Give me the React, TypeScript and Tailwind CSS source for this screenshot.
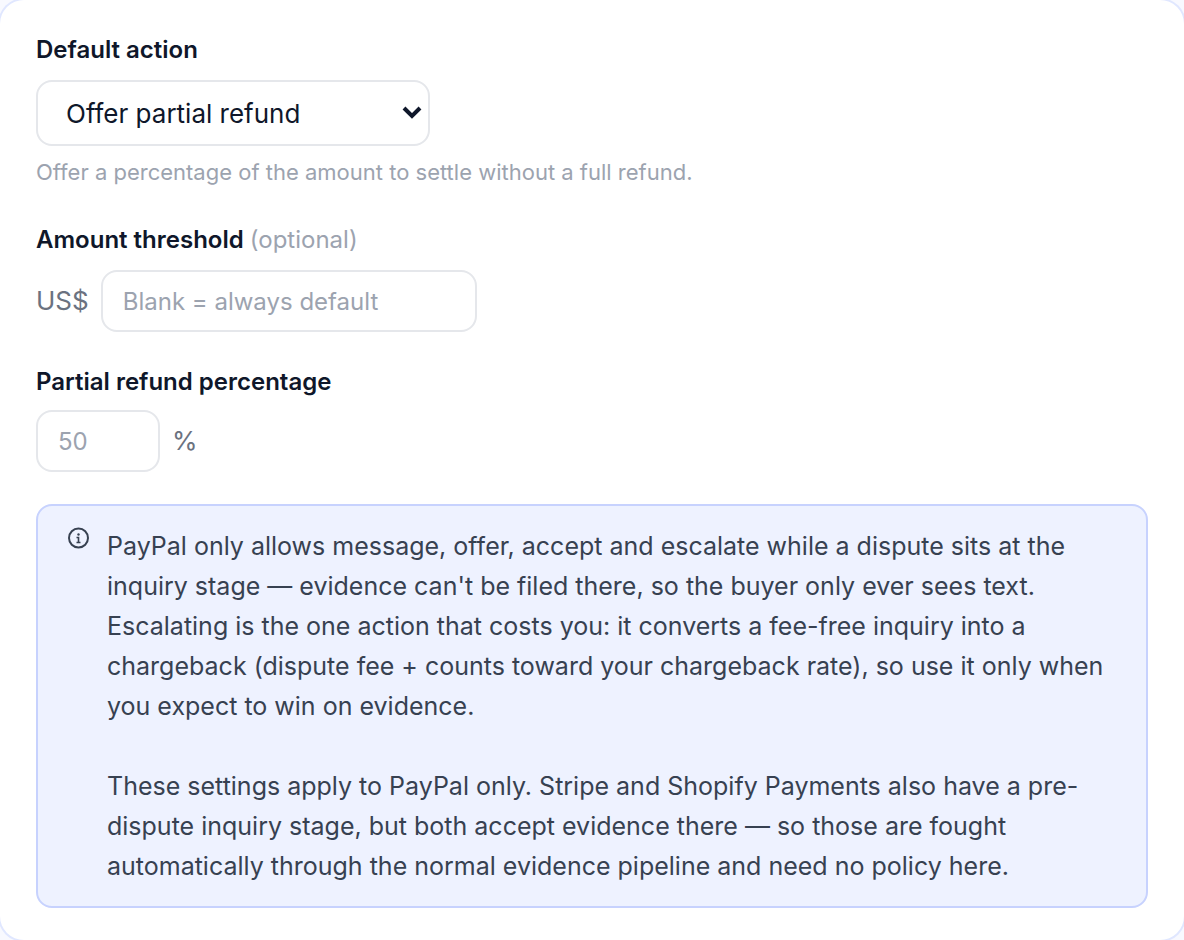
const App = () => {
    return (
        <div className="overflow-hidden bg-[#f8f9ff] font-[Inter,sans-serif]">
            <main className="flex flex-col gap-8 rounded-3xl bg-white px-9 py-8 text-[#0f172a] ring-2 ring-[#e0e7ff]">

                <div className="flex flex-col items-start">
                    <label htmlFor="action" className={fieldLabel}>Default action</label>
                    <div className="relative mt-3">
                        <select id="action" className="h-[66px] w-[394px] appearance-none rounded-2xl border-2 border-[#e5e7eb] bg-white px-7 text-[26px]">
                            <option>Offer partial refund</option>
                            <option>Accept refund</option>
                            <option>Escalate</option>
                        </select>
                        <svg className="pointer-events-none absolute top-6 right-2" width="20" height="18" viewBox="0 0 20 18" fill="none" stroke="currentColor" strokeWidth="4">
                            <path d="M2 4l8 8 8-8" />
                        </svg>
                    </div>
                    <p className="mt-2 text-[22px] leading-9 text-[#9ca3af]">
                        Offer a percentage of the amount to settle without a full refund.
                    </p>
                </div>

                <div className="flex flex-col items-start">
                    <label htmlFor="threshold" className={fieldLabel}>
                        Amount threshold <span className="font-normal text-[#9ca3af]">(optional)</span>
                    </label>
                    <div className="mt-3 flex items-center gap-3">
                        <span className={unit}>US$</span>
                        <input id="threshold" placeholder="Blank = always default" className={`${textBox} w-[376px]`} />
                    </div>
                </div>

                <div className="flex flex-col items-start">
                    <label htmlFor="percentage" className={fieldLabel}>Partial refund percentage</label>
                    <div className="mt-2.5 flex items-center gap-3">
                        <input id="percentage" placeholder="50" className={`${textBox} w-[124px]`} />
                        <span className={unit}>%</span>
                    </div>
                </div>

                <div className="flex gap-4 rounded-2xl border-2 border-[#c7d2fe] bg-[#eef2ff] px-7 py-5 text-[25px] leading-10 text-[#374151]">
                    <InfoIcon />
                    <div className="flex flex-col gap-10">
                        <p>
                            PayPal only allows message, offer, accept and escalate while a dispute sits at the inquiry stage — evidence can't be filed there, so the buyer only ever sees text. Escalating is the one action that costs you: it converts a fee-free inquiry into a chargeback (dispute fee + counts toward your chargeback rate), so use it only when you expect to win on evidence.
                        </p>
                        <p>
                            These settings apply to PayPal only. Stripe and Shopify Payments also have a pre-dispute inquiry stage, but both accept evidence there — so those are fought automatically through the normal evidence pipeline and need no policy here.
                        </p>
                    </div>
                </div>

            </main>
        </div>
    );
};

const InfoIcon = () => (
    <svg className="shrink-0" width="25" height="24" viewBox="0 0 25 24" fill="none" stroke="currentColor" strokeWidth="2">
        <circle cx="12.5" cy="12" r="9.5" />
        <path d="M10.5 11.5h2v5M10.5 16.5h4" strokeWidth="1.6" />
        <circle cx="12.5" cy="8.5" r="1.2" fill="currentColor" stroke="none" />
    </svg>
);

const fieldLabel = "text-2xl leading-9 font-semibold";
const textBox = "h-[62px] rounded-2xl border-2 border-[#e5e7eb] bg-white px-5 text-2xl placeholder:text-[#9ca3af]";
const unit = "text-[26px] leading-9 text-[#6b7280]";

export default App;
